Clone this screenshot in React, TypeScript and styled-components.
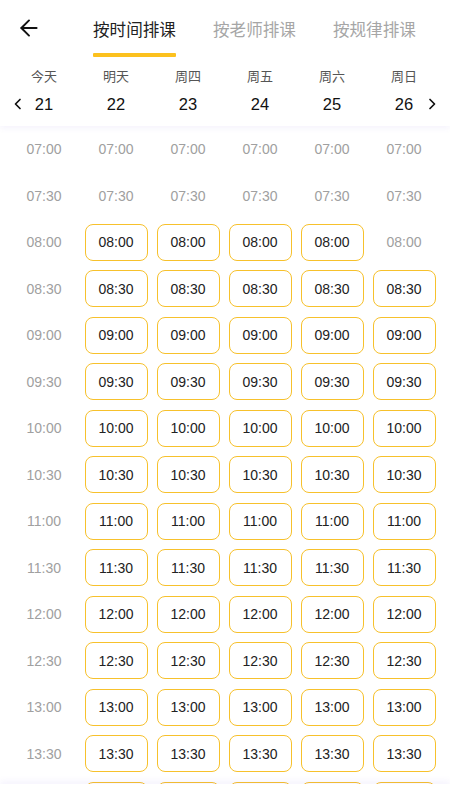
import React, { useState } from "react";
import styled, { createGlobalStyle } from "styled-components";
import { ArrowLeft } from "lucide-react";

const GlobalStyle = createGlobalStyle`
  html, body {
    margin: 0;
    padding: 0;
    background: #ffffff;
  }
  body {
    font-family: "Liberation Sans", "Noto Sans CJK SC", sans-serif;
    -webkit-font-smoothing: antialiased;
  }
`;

const Page = styled.div`
  height: 100vh;
  display: flex;
  flex-direction: column;
  background: #fff;
  overflow: hidden;
`;

const Header = styled.header`
  flex: 0 0 126px;
  background: #fff;
  box-shadow: 0 2px 6px rgba(110, 90, 220, 0.08);
  position: relative;
  z-index: 2;
`;

const TabBar = styled.div`
  height: 58px;
  display: flex;
  align-items: flex-start;
  padding-left: 16px;
`;

const BackButton = styled.button`
  width: 26px;
  height: 26px;
  margin-top: 15px;
  padding: 0;
  border: none;
  background: none;
  color: #111;
  display: flex;
  align-items: center;
  justify-content: center;
  cursor: pointer;
`;

const Tabs = styled.div`
  display: flex;
  gap: 37px;
  margin-left: 51px;
`;

const Tab = styled.div<{ $active?: boolean }>`
  display: flex;
  flex-direction: column;
  align-items: stretch;
  padding-top: 17px;
  cursor: pointer;
  font-family: "Noto Sans CJK SC", sans-serif;
  font-size: 16.6px;
  line-height: 24px;
  color: ${(p) => (p.$active ? "#222" : "#a6a6a6")};
  white-space: nowrap;

  &::after {
    content: "";
    display: block;
    height: 4px;
    margin-top: 12px;
    border-radius: 1px;
    background: ${(p) => (p.$active ? "#FCC11E" : "transparent")};
  }
`;

const DaysStrip = styled.div`
  position: relative;
  padding: 9px 10px 0 8px;
`;

const ColumnsRow = styled.div`
  display: grid;
  grid-template-columns: repeat(6, 72px);
`;

const WeekdayLabel = styled.div`
  text-align: center;
  font-family: "Noto Sans CJK SC", sans-serif;
  font-size: 13px;
  line-height: 18px;
  color: #555;
`;

const DateLabel = styled.div`
  text-align: center;
  font-size: 16.5px;
  line-height: 22px;
  color: #111;
  margin-top: 8px;
`;

const StripArrow = styled.button<{ $side: "left" | "right" }>`
  position: absolute;
  top: 39px;
  ${(p) => (p.$side === "left" ? "left: 12px;" : "right: 12px;")}
  width: 12px;
  height: 14px;
  padding: 0;
  border: none;
  background: none;
  display: flex;
  align-items: center;
  justify-content: center;
  cursor: pointer;
`;

const Schedule = styled.div`
  flex: 1;
  overflow-y: auto;
  scrollbar-width: none;
  padding: 0 10px 0 8px;

  &::-webkit-scrollbar {
    display: none;
  }
`;

const SlotRow = styled.div`
  display: grid;
  grid-template-columns: repeat(6, 72px);
  height: 46.5px;
  align-items: center;
`;

const PlainTime = styled.div`
  text-align: center;
  font-size: 14px;
  color: #a0a0a0;
`;

const SlotButton = styled.button<{ $picked?: boolean }>`
  justify-self: center;
  width: 63px;
  height: 37px;
  padding: 0;
  border: 1px solid #f7c12c;
  border-radius: 8px;
  background: ${(p) => (p.$picked ? "#FFF6D9" : "#fff")};
  font-family: "Liberation Sans", sans-serif;
  font-size: 14px;
  color: #222;
  cursor: pointer;
`;

const BottomBar = styled.div`
  flex: 0 0 16px;
  background: #fff;
  box-shadow: 0 -3px 6px rgba(110, 90, 220, 0.07);
  position: relative;
  z-index: 2;
`;

const Chevron = ({ dir }: { dir: "left" | "right" }) => (
  <svg width="8" height="12" viewBox="0 0 8 12" fill="none">
    <path
      d={dir === "left" ? "M6 1.5 L1.5 6 L6 10.5" : "M2 1.5 L6.5 6 L2 10.5"}
      stroke="#111"
      strokeWidth="1.7"
      strokeLinecap="round"
      strokeLinejoin="round"
    />
  </svg>
);

const days = [
  { week: "今天", date: 21 },
  { week: "明天", date: 22 },
  { week: "周四", date: 23 },
  { week: "周五", date: 24 },
  { week: "周六", date: 25 },
  { week: "周日", date: 26 },
];

const times: string[] = [];
for (let h = 7; h <= 14; h++) {
  const hh = String(h).padStart(2, "0");
  times.push(`${hh}:00`);
  if (h < 14) times.push(`${hh}:30`);
}

// which day columns can be booked at a given slot
const isOpen = (time: string, day: number) => {
  if (day === 0) return false;
  if (time < "08:00") return false;
  if (time === "08:00" && day === 5) return false;
  return true;
};

export default function App() {
  const [tab, setTab] = useState(0);
  const [picked, setPicked] = useState<string | null>(null);
  const tabs = ["按时间排课", "按老师排课", "按规律排课"];

  return (
    <Page>
      <GlobalStyle />
      <Header>
        <TabBar>
          <BackButton aria-label="返回">
            <ArrowLeft size={26} strokeWidth={1.8} />
          </BackButton>
          <Tabs>
            {tabs.map((t, i) => (
              <Tab key={t} $active={tab === i} onClick={() => setTab(i)}>
                {t}
              </Tab>
            ))}
          </Tabs>
        </TabBar>
        <DaysStrip>
          <ColumnsRow>
            {days.map((d) => (
              <WeekdayLabel key={d.week}>{d.week}</WeekdayLabel>
            ))}
          </ColumnsRow>
          <ColumnsRow>
            {days.map((d) => (
              <DateLabel key={d.date}>{d.date}</DateLabel>
            ))}
          </ColumnsRow>
          <StripArrow $side="left" aria-label="上一周">
            <Chevron dir="left" />
          </StripArrow>
          <StripArrow $side="right" aria-label="下一周">
            <Chevron dir="right" />
          </StripArrow>
        </DaysStrip>
      </Header>
      <Schedule>
        {times.map((t) => (
          <SlotRow key={t}>
            {days.map((d, i) => {
              const key = `${d.date}-${t}`;
              return isOpen(t, i) ? (
                <SlotButton
                  key={key}
                  $picked={picked === key}
                  onClick={() => setPicked(key)}
                >
                  {t}
                </SlotButton>
              ) : (
                <PlainTime key={key}>{t}</PlainTime>
              );
            })}
          </SlotRow>
        ))}
      </Schedule>
      <BottomBar />
    </Page>
  );
}
